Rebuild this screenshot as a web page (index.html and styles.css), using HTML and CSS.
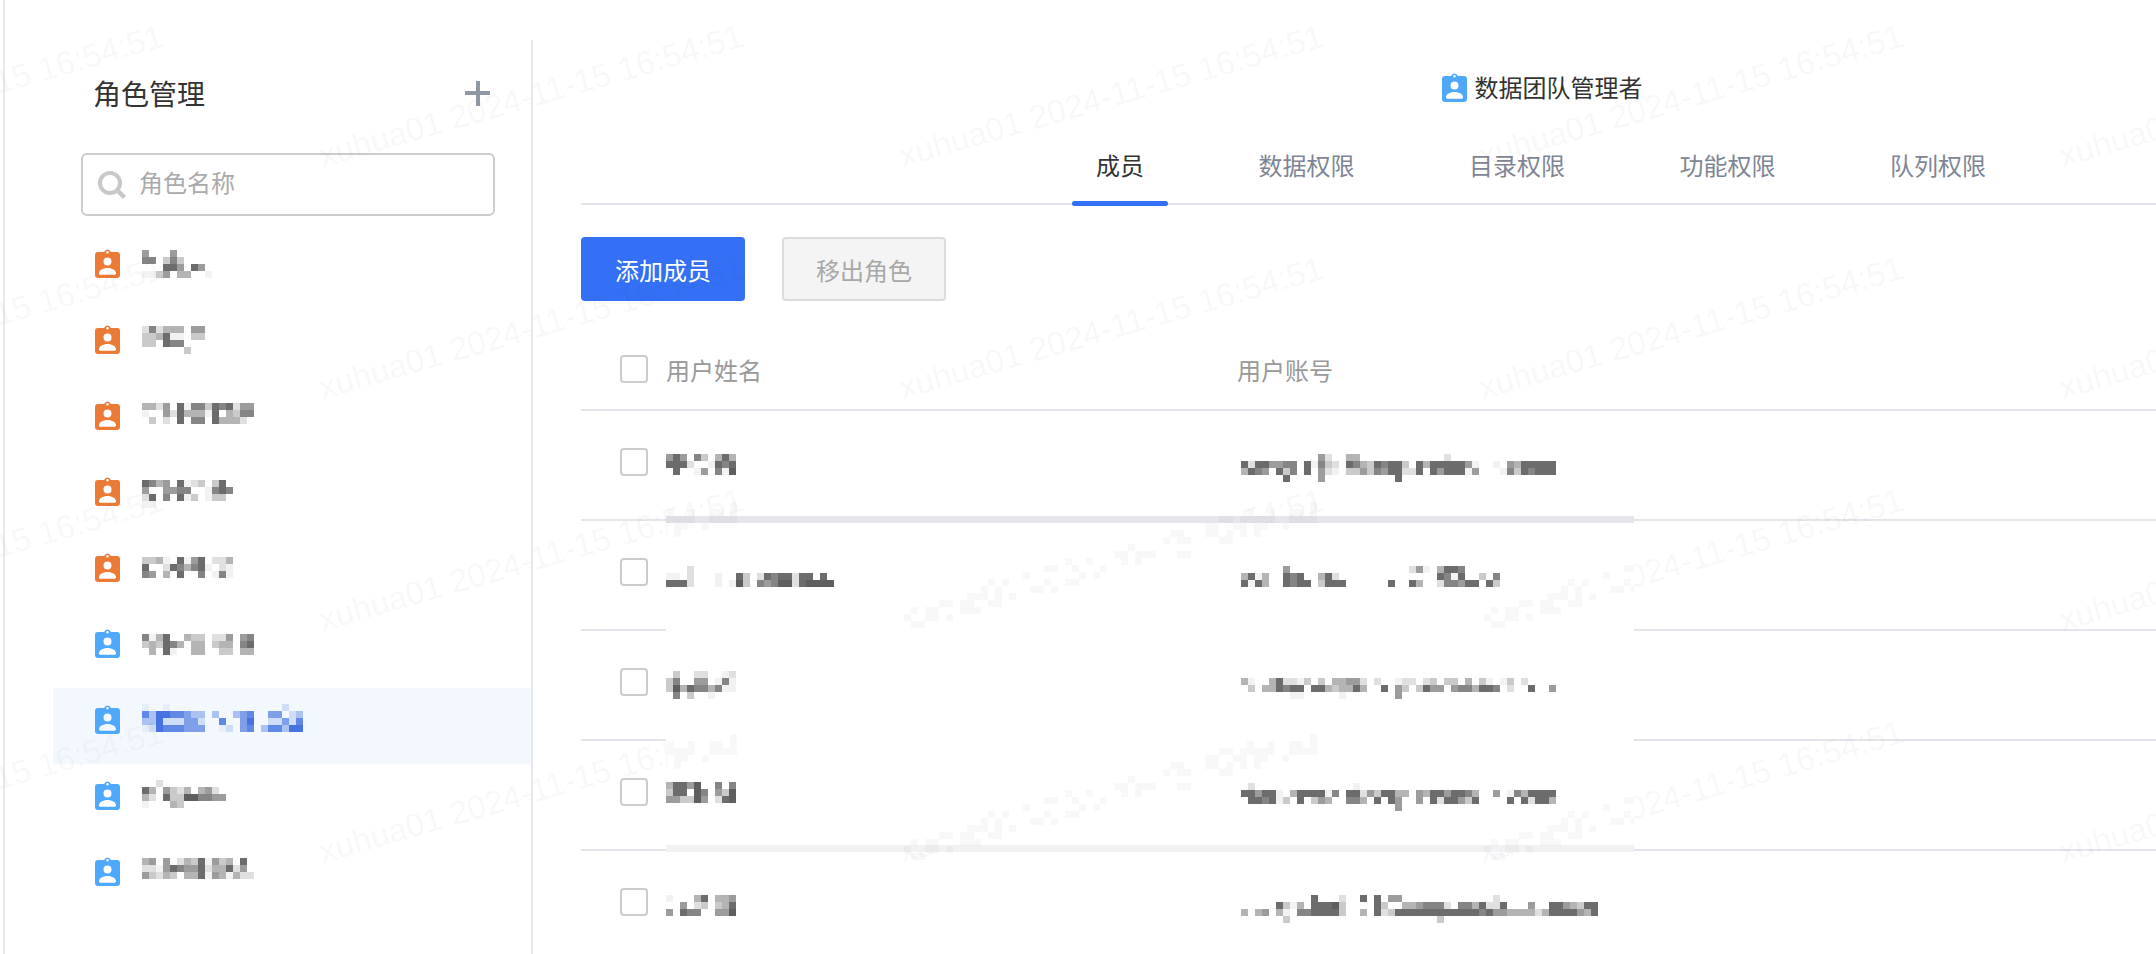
FILE: index.html
```html
<!DOCTYPE html>
<html lang="zh-CN">
<head>
<meta charset="utf-8">
<title>角色管理</title>
<link rel="stylesheet" href="styles.css">
</head>
<body>
<svg class="defs" width="0" height="0" aria-hidden="true">
  <symbol id="badge" viewBox="0 0 25 29">
    <path fill="currentColor" fill-rule="evenodd" d="M3 3h6.2a3.4 3.4 0 0 1 6.6 0H22a3 3 0 0 1 3 3v20a3 3 0 0 1-3 3H3a3 3 0 0 1-3-3V6a3 3 0 0 1 3-3zm9.5-1a1.3 1.3 0 1 0 0 2.6 1.3 1.3 0 0 0 0-2.6zm0 6.6a4 4 0 1 0 0 8 4 4 0 0 0 0-8zM4 24.300c0 .9.5 1.400 1.300 1.400h14.400c.8 0 1.300-.5 1.300-1.400 0-3-3.800-5.300-8.500-5.300S4 21.300 4 24.300z"/>
  </symbol>
</svg>
<div class="page">
  <div class="watermarks" aria-hidden="true">
    <span>xuhua01 2024-11-15 16:54:51</span><span>xuhua01 2024-11-15 16:54:51</span><span>xuhua01 2024-11-15 16:54:51</span><span>xuhua01 2024-11-15 16:54:51</span><span>xuhua01 2024-11-15 16:54:51</span>
    <span>xuhua01 2024-11-15 16:54:51</span><span>xuhua01 2024-11-15 16:54:51</span><span>xuhua01 2024-11-15 16:54:51</span><span>xuhua01 2024-11-15 16:54:51</span><span>xuhua01 2024-11-15 16:54:51</span>
    <span>xuhua01 2024-11-15 16:54:51</span><span>xuhua01 2024-11-15 16:54:51</span><span>xuhua01 2024-11-15 16:54:51</span><span>xuhua01 2024-11-15 16:54:51</span><span>xuhua01 2024-11-15 16:54:51</span>
    <span>xuhua01 2024-11-15 16:54:51</span><span>xuhua01 2024-11-15 16:54:51</span><span>xuhua01 2024-11-15 16:54:51</span><span>xuhua01 2024-11-15 16:54:51</span><span>xuhua01 2024-11-15 16:54:51</span>
    <span>xuhua01 2024-11-15 16:54:51</span><span>xuhua01 2024-11-15 16:54:51</span><span>xuhua01 2024-11-15 16:54:51</span><span>xuhua01 2024-11-15 16:54:51</span><span>xuhua01 2024-11-15 16:54:51</span>
  </div>

  <div class="stripe"></div>

  <aside class="sidebar">
    <div class="side-head">
      <h1 class="side-title">角色管理</h1>
      <span class="plus"></span>
    </div>
    <div class="search">
      <svg class="search-icon" viewBox="0 0 28 28" aria-hidden="true"><circle cx="12" cy="12" r="10" fill="none" stroke="currentColor" stroke-width="4"/><path d="M19 19l7.500 7.500" stroke="currentColor" stroke-width="4.500" fill="none"/></svg>
      <span class="placeholder">角色名称</span>
    </div>
    <ul class="roles">
      <li class="role orange"><svg class="badge"><use href="#badge"/></svg><span class="mosaic" data-top="18" data-rows="50005|660363|000775075|1135044001"></span></li>
      <li class="role orange"><svg class="badge"><use href="#badge"/></svg><span class="mosaic" data-top="18" data-rows="262444055|334711033|330766|0000003"></span></li>
      <li class="role orange"><svg class="badge"><use href="#badge"/></svg><span class="mosaic" data-top="19" data-rows="4425071663767255|1005274441704366|030207066074442"></span></li>
      <li class="role orange"><svg class="badge"><use href="#badge"/></svg><span class="mosaic" data-top="20" data-rows="764507123037|5005566001676|270607130133|11"></span></li>
      <li class="role orange"><svg class="badge"><use href="#badge"/></svg><span class="mosaic" data-top="21" data-rows="3341071570224|7002764671021|6504070060161"></span></li>
      <li class="role blue"><svg class="badge"><use href="#badge"/></svg><span class="mosaic" data-top="22" data-rows="6147004330225056|3437640440344067|0407100440033044"></span></li>
      <li class="role blue active"><svg class="badge"><use href="#badge"/></svg><span class="mosaic" data-top="16" data-rows="a00a0000000000000000b00|ecffeedcc0c00cde00dd0bc|ccfbbbddb00e00df00bbdbe|abfeeeddd00ab0de0ceecff"></span></li>
      <li class="role blue"><svg class="badge"><use href="#badge"/></svg><span class="mosaic" data-top="16" data-rows="0020|74053240452|420733886655|100043"></span></li>
      <li class="role blue"><svg class="badge"><use href="#badge"/></svg><span class="mosaic" data-top="18" data-rows="450502437153407|221576557244725|5324304471541422"></span></li>
    </ul>
  </aside>

  <main class="main">
    <div class="role-name"><svg class="badge blue"><use href="#badge"/></svg><span>数据团队管理者</span></div>
    <nav class="tabs">
      <a class="tab active">成员</a>
      <a class="tab">数据权限</a>
      <a class="tab">目录权限</a>
      <a class="tab">功能权限</a>
      <a class="tab">队列权限</a>
    </nav>
    <div class="toolbar">
      <button class="btn primary">添加成员</button>
      <button class="btn disabled">移出角色</button>
    </div>
    <div class="table">
      <div class="cover"></div>
      <div class="bands">
        <span class="band bx1 by1"></span><span class="band bx1 by2"></span>
        <span class="band bx2 by1"></span><span class="band bx2 by2"></span>
        <span class="band bx3 by1"></span><span class="band bx3 by2"></span>
      </div>
      <div class="row head">
        <span class="check"></span>
        <span class="col-name">用户姓名</span>
        <span class="col-mail">用户账号</span>
      </div>
      <div class="row">
        <span class="check"></span>
        <span class="col-name"><span class="mosaic" data-top="43" data-rows="5750630474|7772001767|0700150618"></span></span>
        <span class="col-mail"><span class="mosaic" data-top="43" data-rows="000000000005200440000000000002|727755660716320764376773074777775100105477777|476507360705210335365772270757771500016376777|000000700005000000000070"></span></span>
      </div>
      <div class="row">
        <span class="check"></span>
        <span class="col-name"><span class="mosaic" data-top="45" data-rows="000200000000000000000000|110200010073027677277070|777200010183065688278888"></span></span>
        <span class="col-mail"><span class="mosaic" data-top="45" data-rows="00000050000000000000000025104776|4714007670047200000000000000761700306|7174007677037770000007007400266577073"></span></span>
      </div>
      <div class="row">
        <span class="check"></span>
        <span class="col-name"><span class="mosaic" data-top="40" data-rows="0300220012|3600550161|3847664611|0603001000"></span></span>
        <span class="col-mail"><span class="mosaic" data-top="47" data-rows="41004722130304455202001220230330403101302|030447677077434474007053037550566477602007005|00000001100000100000005"></span></span>
      </div>
      <div class="row">
        <span class="check"></span>
        <span class="col-name"><span class="mosaic" data-top="41" data-rows="4775800606|3770860538|5533850278"></span></span>
        <span class="col-mail"><span class="mosaic" data-top="42" data-rows="02000000000000001|775771047777160772537744054775776400501647777|077671307035400664070750050727753700007072774|00000000000000000000005"></span></span>
      </div>
      <div class="row">
        <span class="check"></span>
        <span class="col-name"><span class="mosaic" data-top="44" data-rows="1000470445|0050230347|5076600558"></span></span>
        <span class="col-mail"><span class="mosaic" data-top="44" data-rows="0000000000700020070705500000000000002|000007314077783000073004456662066472270005007754377|404504106677773004072377777777777767554444247777547|00000030000000000000000000003"></span></span>
      </div>
    </div>
  </main>
</div>
<script src="mosaic.js"></script>
</body>
</html>
```

FILE: styles.css
```css
* { box-sizing: border-box; }
html, body { margin: 0; height: 100%; overflow: hidden; background: #fff; }
body { font-family: "Noto Sans CJK SC", "Liberation Sans", sans-serif; font-size: 24px; color: #333; }
.defs { position: absolute; }
.page { display: flex; width: 2600px; height: 954px; overflow: hidden; position: relative; }

.watermarks {
  position: absolute;
  left: -339px;
  top: -20px;
  z-index: 1;
  display: grid;
  grid-template-columns: repeat(5, 580px);
  grid-auto-rows: 232px;
  pointer-events: none;
}
.watermarks span {
  display: flex;
  align-items: center;
  justify-content: center;
  white-space: nowrap;
  font-family: "Liberation Sans", sans-serif;
  font-size: 33px;
  color: rgba(60, 60, 80, .05);
  transform: rotate(-16deg);
}

.stripe { flex: none; width: 2px; margin-left: 3px; background: #e8e8ee; }

.sidebar { flex: none; width: 528px; margin-top: 40px; border-right: 2px solid #e8e8ec; }
.side-head { display: flex; align-items: center; justify-content: space-between; height: 40px; margin-top: 33px; padding: 0 41px 0 88px; }
.side-title { margin: 0; font-size: 28px; font-weight: 400; line-height: 40px; color: #333; }
.plus { position: relative; width: 25px; height: 25px; }
.plus::before, .plus::after { content: ""; position: absolute; background: #8f98a4; }
.plus::before { left: 0; right: 0; top: 10.500px; height: 4px; }
.plus::after { top: 0; bottom: 0; left: 10.500px; width: 4px; }

.search { display: flex; align-items: center; width: 414px; height: 63px; margin: 40px 0 0 76px; padding-left: 15px; border: 2px solid #ccc; border-radius: 6px; }
.search-icon { width: 28px; height: 28px; color: #c8c8c8; overflow: visible; }
.placeholder { margin: 0 0 5px 13px; color: #aaa; line-height: 1; }

.roles { list-style: none; margin: 16px 0 0; padding: 0; }
.role { display: flex; align-items: flex-start; height: 76px; margin-left: 48px; padding-left: 42px; }
.role.active { background: #f3f8ff; }
.badge { flex: none; display: block; width: 25px; height: 29px; margin-top: 17px; }
.role .mosaic { margin-left: 22px; }
.orange { color: #ec7a37; }
.blue { color: #4ea8fb; }

.main { flex: none; width: 1968px; padding-left: 48px; }
.role-name { display: flex; align-items: center; justify-content: center; height: 28px; margin-top: 73px; padding-left: 2px; gap: 8px; line-height: 28px; color: #333; }
.role-name .badge { margin-top: 0; }

.tabs { display: flex; justify-content: center; gap: 66.5px; height: 75px; margin-top: 29px; border-bottom: 2px solid #e4e4ea; }
.tab { position: relative; height: 73px; padding: 0 24px; line-height: 70px; color: #7e8594; }
.tab.active { color: #333; }
.tab.active::after { content: ""; position: absolute; left: 0; right: 0; bottom: -3px; height: 5px; border-radius: 3px; background: #3370f5; }

.toolbar { display: flex; gap: 37px; margin-top: 32px; }
.btn { width: 164px; height: 64px; padding: 0; font: inherit; border-radius: 4px; }
.btn.primary { border: 0; background: #3370f5; color: #fff; }
.btn.disabled { border: 2px solid #dcdcdc; background: #f4f4f4; color: #a8a8a8; }

.table { position: relative; margin-top: 35px; }
.cover { position: absolute; left: 85px; top: 180px; width: 968px; height: 336px; z-index: 2; background: #fff; border-top: 7px solid #e5e5ea; border-bottom: 7px solid #f2f2f4; }
.bands { position: absolute; left: 85px; top: 158px; width: 968px; height: 375px; z-index: 2; overflow: hidden; }
.band { position: absolute; display: block; }
.bx1 { left: 231px; }
.bx2 { left: 811px; }
.bx3 { left: -349px; }
.by1 { top: 8px; }
.by2 { top: 240px; }

.row { display: flex; align-items: flex-start; height: 110px; padding-left: 39px; border-bottom: 2px solid #e4e4ea; }
.row.head { align-items: center; height: 75px; padding-bottom: 7px; color: #999; }
.check { flex: none; width: 28px; height: 28px; margin-top: 37px; background: #fff; border: 2px solid #ccc; border-radius: 4px; position: relative; z-index: 3; }
.row.head .check { margin-top: 0; }
.col-name { flex: none; width: 571px; margin-left: 18px; position: relative; z-index: 3; }
.col-mail { flex: none; position: relative; z-index: 3; }
.col-mail .mosaic { margin-left: 4px; }

.mosaic { display: block; }
.mosaic svg, .band svg { display: block; }
```

FILE: mosaic.js
```js
// Draws the blurred-out (mosaic) names and mail addresses from their block data.
var TONES = {
  1: '#f2f2f2', 2: '#e0e0e0', 3: '#cacaca', 4: '#b4b4b4',
  5: '#9c9c9c', 6: '#858585', 7: '#6c6c6c', 8: '#5e5e5e',
  a: '#e6eefc', b: '#cfdef8', c: '#a9c2f1', d: '#7f9fe9', e: '#6088e5', f: '#4673e1'
};
var BLOCK = 7;
var NS = 'http://www.w3.org/2000/svg';

function makeSvg(cols, rows) {
  var svg = document.createElementNS(NS, 'svg');
  svg.setAttribute('width', cols * BLOCK);
  svg.setAttribute('height', rows * BLOCK);
  svg.setAttribute('shape-rendering', 'crispEdges');
  return svg;
}

function addBlock(svg, x, y, fill) {
  var r = document.createElementNS(NS, 'rect');
  r.setAttribute('x', x * BLOCK);
  r.setAttribute('y', y * BLOCK);
  r.setAttribute('width', BLOCK);
  r.setAttribute('height', BLOCK);
  r.setAttribute('fill', fill);
  svg.appendChild(r);
}

document.querySelectorAll('.mosaic').forEach(function (el) {
  var rows = el.dataset.rows.split('|');
  var cols = Math.max.apply(null, rows.map(function (r) { return r.length; }));
  var svg = makeSvg(cols, rows.length);
  rows.forEach(function (row, y) {
    row.split('').forEach(function (ch, x) {
      if (TONES[ch]) addBlock(svg, x, y, TONES[ch]);
    });
  });
  el.style.marginTop = el.dataset.top + 'px';
  el.appendChild(svg);
});

// The watermark where it was mosaicked along with the table: columns per row.
var BAND = [
  [59],
  [50, 53, 56, 57, 59],
  [46, 47, 49, 50, 51, 52, 53, 56, 57, 58, 59],
  [44, 45, 48, 49, 51, 52, 55],
  [39, 40, 44, 45, 47, 49, 51],
  [38, 40, 41, 46, 47],
  [33],
  [31, 32, 34, 35, 36, 40, 41],
  [24, 27, 32, 34],
  [21, 22, 25, 29],
  [18, 26, 28],
  [13, 15, 21, 24, 25],
  [12, 14, 19, 20, 22],
  [10, 11, 12, 14, 16],
  [6, 7, 9, 10, 13, 14],
  [2, 4, 5, 9, 10, 11],
  [1, 4, 5, 7],
  [2, 3]
];

document.querySelectorAll('.band').forEach(function (el) {
  var svg = makeSvg(60, BAND.length);
  BAND.forEach(function (cols, y) {
    cols.forEach(function (x) { addBlock(svg, x, y, 'rgba(60, 60, 80, .035)'); });
  });
  el.appendChild(svg);
});
```
